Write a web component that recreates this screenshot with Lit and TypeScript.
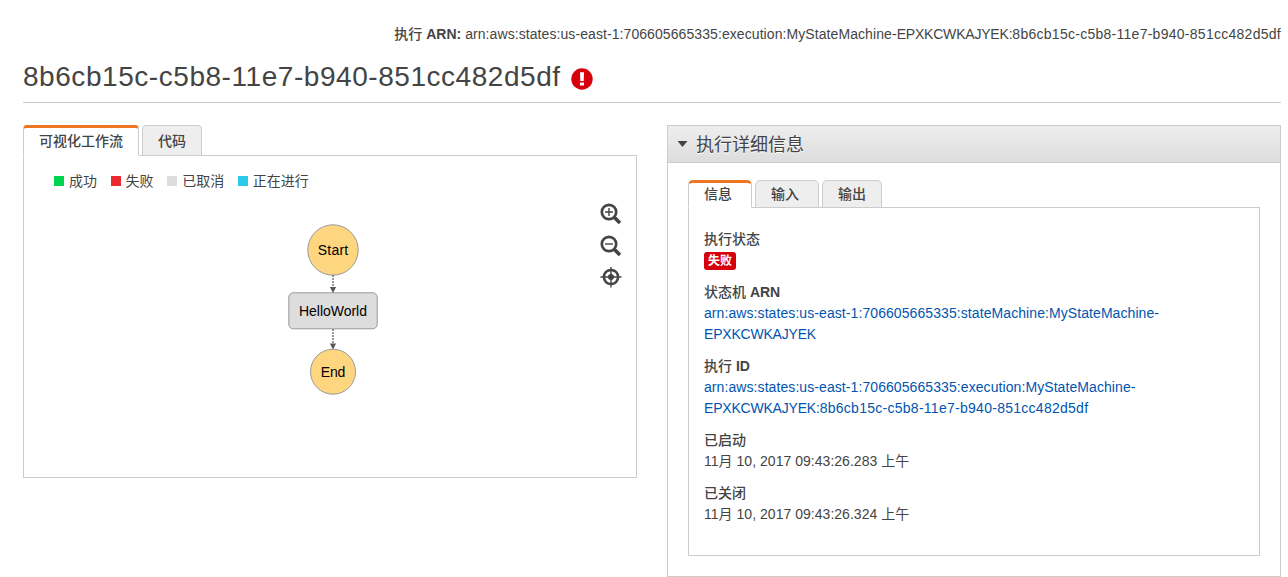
import { LitElement, html, css, svg } from "lit";
import { customElement } from "lit/decorators.js";

const EXECUTION_ID = "8b6cb15c-c5b8-11e7-b940-851cc482d5df";
const MACHINE_SUFFIX = "EPXKCWKAJYEK";
const ARN = "arn:aws:states:us-east-1:706605665335:";

const LEGEND = [
  { label: "成功", tone: "ok" },
  { label: "失败", tone: "fail" },
  { label: "已取消", tone: "cancel" },
  { label: "正在进行", tone: "run" },
];

const base = css`
  * { box-sizing: border-box; }
  .tabs { display: flex; position: relative; margin-bottom: -1px; gap: 3px; }
  .tab {
    height: 31px; line-height: 30px; padding: 0 15px; border: 1px solid #ccc;
    border-radius: 4px 4px 0 0; background: #eee; font-weight: 500; font-size: 14px;
  }
  .tab.active { background: #fff; border-bottom-color: #fff; border-top: 3px solid #ec7621; line-height: 27px; }
  .box { border: 1px solid #ccc; }
`;

const arnText = css`
  .path { letter-spacing: 0.08px; }
  .suffix { letter-spacing: -0.2px; }
  .uuid { letter-spacing: 0.27px; }
`;

@customElement("workflow-graph")
export class WorkflowGraph extends LitElement {
  static styles = css`
    :host { display: block; width: 100px; height: 180px; }
    svg { display: block; }
    text { font: 14px "Liberation Sans", Arial, sans-serif; text-anchor: middle; fill: #000; }
    .terminal { fill: #ffd680; stroke: #999; }
    .state { fill: #ddd; stroke: #999; }
    .edge { stroke: #555; stroke-width: 1.2; stroke-dasharray: 2 1; }
    .head { fill: #555; }
  `;
  render() {
    const edge = (y1: number, y2: number) => svg`
      <path class="edge" d="M50 ${y1}V${y2 - 5}" />
      <path class="head" d="M46.9 ${y2 - 6}h6.2l-3.1 6z" />`;
    return html`<svg width="100" height="180" viewBox="0 0 100 180">
      <circle class="terminal" cx="50" cy="30" r="25.2" />
      <rect class="state" x="5.8" y="72.8" width="88.4" height="36" rx="4.5" />
      <circle class="terminal" cx="50" cy="151.7" r="22.5" />
      ${edge(55, 73)}${edge(109, 129.5)}
      <text x="50" y="35" textLength="30.5">Start</text>
      <text x="50" y="96" textLength="68">HelloWorld</text>
      <text x="50" y="157" textLength="24.5">End</text>
    </svg>`;
  }
}

@customElement("workflow-panel")
export class WorkflowPanel extends LitElement {
  static styles = [base, css`
    :host { display: block; width: 614px; }
    .box { height: 323px; padding: 15px 14px 0 30px; }
    .legend { display: flex; gap: 13.6px; line-height: 20px; }
    .item { display: flex; align-items: center; gap: 5px; }
    .swatch { width: 10px; height: 10px; }
    .ok { background: #00d34f; }
    .fail { background: #ea2931; }
    .cancel { background: #ddd; }
    .run { background: #2bcaed; }
    .stage { display: flex; justify-content: space-between; padding: 29px 0 0 229px; }
    .tools { display: flex; flex-direction: column; gap: 10px; margin-top: -17px; }
    .tools svg { width: 22px; height: 22px; fill: none; stroke: #444; display: block; }
    .solid { fill: #444; stroke: none; }
  `];
  render() {
    const lens = (plus: boolean) => html`<svg viewBox="0 0 22 22">
      <circle cx="9" cy="9" r="7.2" stroke-width="2.7" />
      <path d="M14.2 14.2L20 20" stroke-width="3.6" />
      <path d=${plus ? "M5 9h8M9 5v8" : "M5 9h8"} stroke-width="1.4" />
    </svg>`;
    return html`
      <div class="tabs"><div class="tab active">可视化工作流</div><div class="tab">代码</div></div>
      <div class="box">
        <div class="legend">${LEGEND.map((l) => html`
          <span class="item"><i class="swatch ${l.tone}"></i>${l.label}</span>`)}</div>
        <div class="stage">
          <workflow-graph></workflow-graph>
          <div class="tools">
            ${lens(true)}${lens(false)}
            <svg viewBox="0 0 22 22">
              <circle cx="11" cy="10" r="7.1" stroke-width="2.5" />
              <path d="M11 -.5v21M.5 10h21" stroke-width="1.4" />
              <circle class="solid" cx="11" cy="10" r="3" />
            </svg>
          </div>
        </div>
      </div>`;
  }
}

@customElement("details-panel")
export class DetailsPanel extends LitElement {
  static styles = [base, arnText, css`
    :host { display: block; box-sizing: border-box; width: 614px; height: 452px; border: 1px solid #ccc; }
    .head {
      display: flex; align-items: center; height: 37px; padding-left: 9px; gap: 8px;
      font-size: 18px; border-bottom: 1px solid #ccc;
      background: linear-gradient(#eee, #ddd); text-shadow: 0 1px 0 #fff;
    }
    .head svg { width: 11px; height: 6px; fill: #444; }
    .head span { margin-top: -3px; }
    .body { padding: 17px 20px 0; }
    .tabs .tab { height: 28px; line-height: 27px; border-radius: 5px 5px 0 0; }
    .tabs .active { line-height: 23px; }
    .wide { padding-right: 19px; }
    .box { height: 349px; padding: 21px 15px 0; }
    dl, dt, dd { margin: 0; }
    dl { line-height: 21px; }
    dt { font-weight: 500; }
    dt b { font-weight: 700; }
    dd { margin-bottom: 11px; }
    a { color: #0055b0; }
    .line { display: block; width: max-content; }
    .time { letter-spacing: 0.03px; }
    .badge {
      display: block; width: 32px; height: 18px; margin: 2px 0 12px; border-radius: 3px; background: #d5000b;
      color: #fff; font-size: 12px; font-weight: 700; line-height: 19px; text-align: center;
    }
  `];
  render() {
    return html`
      <div class="head"><svg viewBox="0 0 11 6"><path d="M.5 0h10L5.5 6z" /></svg><span>执行详细信息</span></div>
      <div class="body">
        <div class="tabs">
          <div class="tab active wide">信息</div><div class="tab wide">输入</div><div class="tab">输出</div>
        </div>
        <div class="box">
          <dl>
            <dt>执行状态</dt>
            <dd class="badge">失败</dd>
            <dt>状态机 <b>ARN</b></dt>
            <dd><a><span class="line path">${ARN}stateMachine:MyStateMachine-</span><span class="line suffix">${MACHINE_SUFFIX}</span></a></dd>
            <dt>执行 <b>ID</b></dt>
            <dd><a><span class="line path">${ARN}execution:MyStateMachine-</span><span class="line"><span class="suffix">${MACHINE_SUFFIX}:</span><span class="uuid">${EXECUTION_ID}</span></span></a></dd>
            <dt>已启动</dt>
            <dd class="time">11月 10, 2017 09:43:26.283 上午</dd>
            <dt>已关闭</dt>
            <dd class="time">11月 10, 2017 09:43:26.324 上午</dd>
          </dl>
        </div>
      </div>`;
  }
}

@customElement("app-root")
export class AppRoot extends LitElement {
  static styles = [arnText, css`
    :host {
      display: block; box-sizing: border-box; height: 577px; overflow: hidden; background: #fff; color: #444;
      padding: 24px 7px 0 23px; font: 14px "Liberation Sans", "Noto Sans CJK SC", Arial, sans-serif;
    }
    .arn { text-align: right; line-height: 20px; white-space: nowrap; }
    .arn b { font-weight: 500; }
    .arn strong { font-weight: 700; }
    .title {
      display: flex; align-items: center; gap: 10px; height: 59px; padding-top: 7px; box-sizing: border-box;
      border-bottom: 1px solid #ccc; font-size: 28px; white-space: nowrap; margin-bottom: 22px;
    }
    h1 { margin: 0; font-size: inherit; font-weight: 400; letter-spacing: 0.55px; }
    .alert { width: 22px; height: 22px; margin-top: 5px; }
    .columns { display: flex; justify-content: space-between; align-items: flex-start; }
  `];
  render() {
    return html`
      <div class="arn"><b>执行</b> <strong>ARN:</strong> <span class="path">${ARN}execution:MyStateMachine-</span><span class="suffix">${MACHINE_SUFFIX}:</span><span class="uuid">${EXECUTION_ID}</span></div>
      <div class="title">
        <h1>${EXECUTION_ID}</h1>
        <svg class="alert" viewBox="0 0 22 22">
          <circle cx="11" cy="11" r="10.7" fill="#d5000b" />
          <path d="M9 4.2h4l-.3 8.8H9.3zM9 14.4h4v3H9z" fill="#fff" />
        </svg>
      </div>
      <div class="columns"><workflow-panel></workflow-panel><details-panel></details-panel></div>`;
  }
}
